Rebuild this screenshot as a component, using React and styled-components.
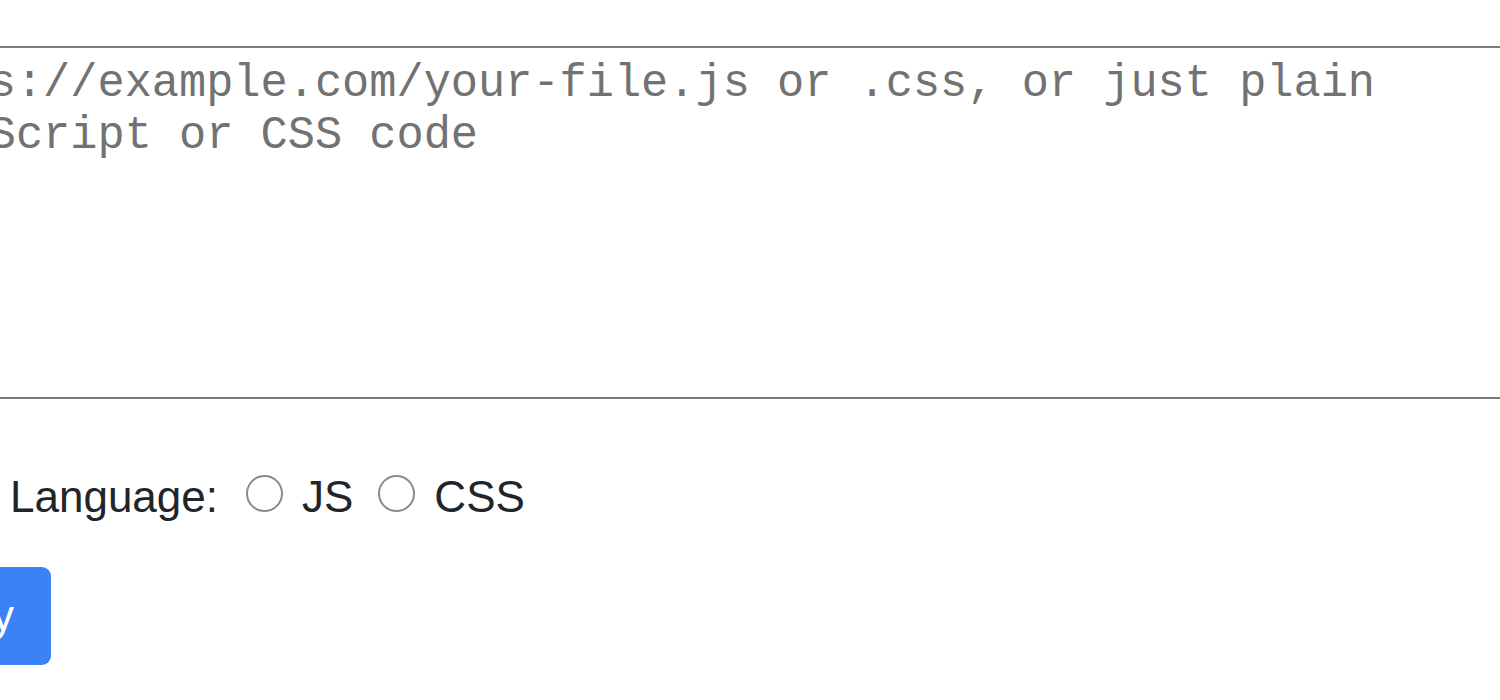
import React, { useState } from 'react';
import styled, { createGlobalStyle } from 'styled-components';

const GlobalStyle = createGlobalStyle`
  html, body {
    margin: 0;
    padding: 0;
    background: #fff;
    overflow: hidden;
  }
  body {
    font-family: "Liberation Sans", Arial, Helvetica, sans-serif;
  }
`;

const Page = styled.div`
  width: 1500px;
  height: 700px;
  overflow: hidden;
  padding-top: 46px;
  box-sizing: border-box;
`;

const CodeInput = styled.textarea`
  display: block;
  box-sizing: border-box;
  margin-left: -128px;
  width: 1780px;
  height: 353px;
  padding: 10px 8px 7px;
  border: 2px solid #7a7a7a;
  border-left: none;
  border-right: none;
  font-family: "Courier New", "Liberation Mono", monospace;
  font-size: 45.3px;
  line-height: 52px;
  color: #222;
  resize: none;
  outline: none;
  background: #fff;

  &::placeholder {
    color: #727272;
    opacity: 1;
  }
`;

const LanguageRow = styled.div`
  display: flex;
  align-items: center;
  gap: 25px;
  margin-top: 72px;
  padding-left: 10px;
  font-size: 44px;
  line-height: 51px;
  color: #212529;
`;

const RowLabel = styled.span`
  margin-right: 3px;
`;

const Option = styled.label`
  display: flex;
  align-items: center;
  gap: 19px;
  cursor: pointer;
`;

const Radio = styled.input.attrs({ type: 'radio' })`
  appearance: none;
  margin: -6px 0 0 0;
  width: 37px;
  height: 37px;
  border: 2px solid #8a8a8a;
  border-radius: 50%;
  background: #fff;
  box-sizing: border-box;
  cursor: pointer;

  &:checked {
    border-color: #3b82f6;
    box-shadow: inset 0 0 0 7px #fff;
    background: #3b82f6;
  }
`;

const SubmitButton = styled.button`
  display: block;
  margin-top: 45px;
  margin-left: -138px;
  padding: 23px 37px;
  border: none;
  border-radius: 9px;
  background: #3b82f6;
  color: #fff;
  font-family: "Liberation Sans", Arial, sans-serif;
  font-size: 44px;
  line-height: 52px;
  cursor: pointer;
`;

export default function App() {
  const [language, setLanguage] = useState('');
  const [code, setCode] = useState('');

  return (
    <Page>
      <GlobalStyle />
      <CodeInput
        value={code}
        onChange={(e) => setCode(e.target.value)}
        placeholder="https://example.com/your-file.js or .css, or just plain JavaScript or CSS code"
      />
      <LanguageRow>
        <RowLabel>Language:</RowLabel>
        <Option>
          <Radio
            name="language"
            checked={language === 'js'}
            onChange={() => setLanguage('js')}
          />
          JS
        </Option>
        <Option>
          <Radio
            name="language"
            checked={language === 'css'}
            onChange={() => setLanguage('css')}
          />
          CSS
        </Option>
      </LanguageRow>
      <SubmitButton>Minify</SubmitButton>
    </Page>
  );
}
